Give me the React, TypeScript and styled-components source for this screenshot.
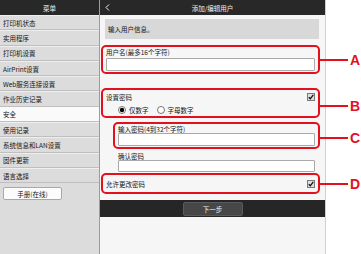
import React from "react"
import styled, { createGlobalStyle } from "styled-components"

const RED = "#e3101e"

const GlobalStyle = createGlobalStyle`
	html, body {
		margin: 0;
		padding: 0;
		background: #ffffff;
	}
	body {
		font-family: "Noto Sans CJK SC", "Noto Sans", sans-serif;
		color: #141414;
	}
`

const menuItems = [
	"打印机状态",
	"实用程序",
	"打印机设置",
	"AirPrint设置",
	"Web服务连接设置",
	"作业历史记录",
	"安全",
	"使用记录",
	"系统信息和LAN设置",
	"固件更新",
	"语言选择",
]

const Screen = styled.div`
	display: flex;
	width: 361px;
	height: 254px;
	overflow: hidden;
`

const Sidebar = styled.div`
	width: 100px;
	box-sizing: border-box;
	border-right: 1px solid #9c9c9c;
	background: #dcdcdc;
	display: flex;
	flex-direction: column;
`

const DarkBar = styled.div`
	height: 15px;
	flex-shrink: 0;
	background: #282828;
	color: #f0f0f0;
	font-size: 6.5px;
	display: flex;
	align-items: center;
`

const SideHeader = styled(DarkBar)`
	justify-content: center;
`

const MenuItem = styled.div<{ $active?: boolean }>`
	height: 15.3px;
	box-sizing: border-box;
	padding-left: 3px;
	display: flex;
	align-items: center;
	font-size: 6.5px;
	background: ${(p) => (p.$active ? "#fafafa" : "transparent")};
	border-bottom: 1px solid #bfbfbf;
	border-top: 1px solid ${(p) => (p.$active ? "#fafafa" : "#eeeeee")};
`

const ManualButton = styled.div`
	margin: 4px 0 0 3px;
	width: 59px;
	height: 13px;
	box-sizing: border-box;
	border: 1px solid #a8a8a8;
	border-radius: 2px;
	background: #fcfcfc;
	font-size: 6.5px;
	display: flex;
	align-items: center;
	justify-content: center;
`

const Main = styled.div`
	width: 226px;
	box-sizing: border-box;
	border-right: 1px solid #cfcfcf;
	background: #f6f6f6;
	display: flex;
	flex-direction: column;
`

const TitleBar = styled(DarkBar)`
	position: relative;
	justify-content: center;
`

const Back = styled.svg`
	position: absolute;
	left: 5px;
	top: 4px;
`

const Notice = styled.div`
	margin: 4px 6px 0 5px;
	height: 20px;
	background: #d8d8d8;
	padding-left: 3px;
	font-size: 6.5px;
	display: flex;
	align-items: center;
`

const Form = styled.div`
	display: flex;
	flex-direction: column;
	padding: 0 5px 0 1px;
`

const Field = styled.div<{ $marked?: boolean; $indent?: number; $gap?: number }>`
	position: relative;
	margin-top: ${(p) => p.$gap ?? 0}px;
	margin-left: ${(p) => p.$indent ?? 0}px;
	border: ${(p) => (p.$marked ? `2px solid ${RED}` : "none")};
	border-radius: 5px;
	padding: ${(p) => (p.$marked ? "1px 3px 1px 3px" : "0 5px 0 5px")};
	font-size: 6.5px;
	display: flex;
	flex-direction: column;
`

const Label = styled.div<{ $h?: number; $top?: number }>`
	height: ${(p) => p.$h ?? 9}px;
	margin-top: ${(p) => p.$top ?? 0}px;
	line-height: ${(p) => p.$h ?? 9}px;
	white-space: nowrap;
`

const Input = styled.div<{ $h?: number; $top?: number }>`
	height: ${(p) => p.$h ?? 13}px;
	margin-top: ${(p) => p.$top ?? 0}px;
	box-sizing: border-box;
	border: 1px solid #a9a9a9;
	border-radius: 1px;
	background: #ffffff;
`

const Row = styled.div<{ $h: number; $top?: number }>`
	height: ${(p) => p.$h}px;
	margin-top: ${(p) => p.$top ?? 0}px;
	display: flex;
	align-items: center;
	justify-content: space-between;
	white-space: nowrap;
`

const RadioRow = styled.div`
	margin-top: 4px;
	height: 10px;
	padding-left: 12px;
	display: flex;
	align-items: center;
	gap: 8px;
`

const RadioOption = styled.div`
	display: flex;
	align-items: center;
	gap: 3px;
`

const Callout = styled.div<{ $dy?: number }>`
	position: absolute;
	left: calc(100% + 2px);
	top: calc(50% + ${(p) => p.$dy ?? 0}px);
	transform: translateY(-50%);
	display: flex;
	align-items: center;
	gap: 2px;
`

const CalloutLine = styled.div`
	width: 28px;
	height: 2px;
	background: ${RED};
`

const CalloutLetter = styled.span`
	font-family: "Liberation Sans", Arial, sans-serif;
	font-weight: bold;
	font-size: 14px;
	line-height: 14px;
	color: ${RED};
`

const Footer = styled.div`
	margin-top: 6px;
	height: 17px;
	background: #262626;
	display: flex;
	align-items: center;
	justify-content: center;
`

const NextButton = styled.div`
	width: 60px;
	height: 14px;
	box-sizing: border-box;
	border: 1px solid #5a5a5a;
	border-radius: 2px;
	background: #474747;
	color: #f2f2f2;
	font-size: 6.5px;
	display: flex;
	align-items: center;
	justify-content: center;
`

const Check = () => (
	<svg width="8" height="8" viewBox="0 0 8 8">
		<rect x="0.5" y="0.5" width="7" height="7" fill="#dedede" stroke="#7a7a7a" />
		<path d="M1.8 4.2 L3.3 5.8 L6.3 1.8" fill="none" stroke="#111" strokeWidth="1.3" />
	</svg>
)

const Radio = ({ on }: { on?: boolean }) => (
	<svg width="8" height="8" viewBox="0 0 8 8">
		<circle cx="4" cy="4" r="3.5" fill="#fff" stroke="#555" strokeWidth="0.8" />
		{on && <circle cx="4" cy="4" r="2.2" fill="#000" />}
	</svg>
)

const Mark = ({ letter, dy }: { letter: string; dy?: number }) => (
	<Callout $dy={dy}>
		<CalloutLine />
		<CalloutLetter>{letter}</CalloutLetter>
	</Callout>
)

export default function App() {
	return (
		<>
			<GlobalStyle />
			<Screen>
				<Sidebar>
					<SideHeader>菜单</SideHeader>
					{menuItems.map((m) => (
						<MenuItem key={m} $active={m === "安全"}>
							{m}
						</MenuItem>
					))}
					<ManualButton>手册(在线)</ManualButton>
				</Sidebar>

				<Main>
					<TitleBar>
						<Back width="5" height="7" viewBox="0 0 5 7">
							<path d="M4 0.5 L1 3.5 L4 6.5" fill="none" stroke="#eee" strokeWidth="1" />
						</Back>
						添加/编辑用户
					</TitleBar>
					<Notice>输入用户信息。</Notice>

					<Form>
						<Field $marked $gap={6}>
							<Label>用户名(最多16个字符)</Label>
							<Input $top={1} />
							<Mark letter="A" />
						</Field>

						<Field $marked $gap={14}>
							<Row $h={9} $top={1}>
								<span>设置密码</span>
								<Check />
							</Row>
							<RadioRow>
								<RadioOption>
									<Radio on />
									仅数字
								</RadioOption>
								<RadioOption>
									<Radio />
									字母数字
								</RadioOption>
							</RadioRow>
							<Mark letter="B" dy={3} />
						</Field>

						<Field $marked $gap={4} $indent={12}>
							<Label $h={8}>输入密码(4到32个字符)</Label>
							<Input />
							<Mark letter="C" dy={2} />
						</Field>

						<Field $indent={12}>
							<Label $h={7} $top={4}>确认密码</Label>
							<Input $h={12} />
						</Field>

						<Field $marked $gap={1}>
							<Row $h={15}>
								<span>允许更改密码</span>
								<Check />
							</Row>
							<Mark letter="D" />
						</Field>
					</Form>

					<Footer>
						<NextButton>下一步</NextButton>
					</Footer>
				</Main>
			</Screen>
		</>
	)
}
